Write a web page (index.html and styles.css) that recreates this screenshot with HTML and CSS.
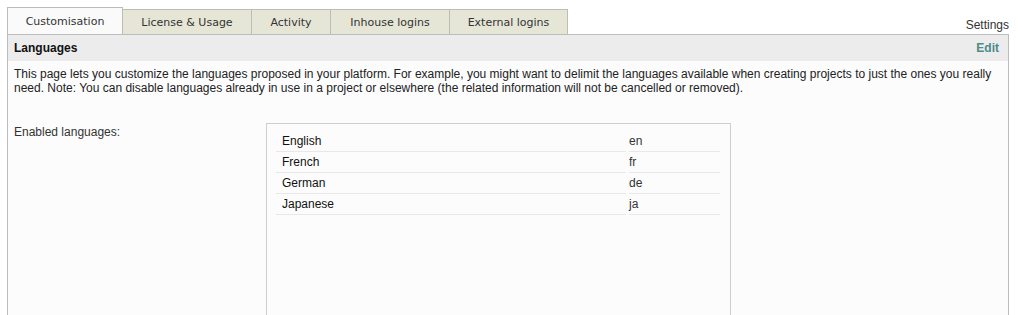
FILE: index.html
```html
<!DOCTYPE html>
<html>
<head>
<meta charset="utf-8">
<link rel="stylesheet" href="styles.css">
</head>
<body>
<div class="page">
  <div class="tabbar">
    <div class="tab active t-custom">Customisation</div>
    <div class="tab t-license">License &amp; Usage</div>
    <div class="tab t-activity">Activity</div>
    <div class="tab t-inhouse">Inhouse logins</div>
    <div class="tab t-external">External logins</div>
    <div class="settings">Settings</div>
  </div>
  <div class="panel">
    <div class="panel-head">
      <span class="title">Languages</span>
      <span class="edit">Edit</span>
    </div>
    <div class="panel-body">
      <p class="intro">This page lets you customize the languages proposed in your platform. For example, you might want to delimit the languages available when creating projects to just the ones you really need. Note: You can disable languages already in use in a project or elsewhere (the related information will not be cancelled or removed).</p>
      <div class="field">
        <div class="label">Enabled languages:</div>
        <div class="langbox">
          <table class="langs">
            <tr><td class="name">English</td><td class="code">en</td></tr>
            <tr><td class="name">French</td><td class="code">fr</td></tr>
            <tr><td class="name">German</td><td class="code">de</td></tr>
            <tr><td class="name">Japanese</td><td class="code">ja</td></tr>
          </table>
        </div>
      </div>
    </div>
  </div>
</div>
</body>
</html>
```

FILE: styles.css
```css
html, body {
  margin: 0;
  padding: 0;
  background: #ffffff;
}
body {
  font-family: "Liberation Sans", Arial, sans-serif;
  font-size: 12px;
  color: #222;
}
.page {
  padding: 7px 9px 0 7px;
}
.tabbar {
  display: flex;
  align-items: flex-end;
  height: 27px;
}
.tab {
  font-family: "DejaVu Sans", Verdana, sans-serif;
  font-size: 11px;
  color: #333;
  height: 25px;
  line-height: 25px;
  text-align: center;
  background: #e6e6d7;
  border: 1px solid #bdbdb5;
  border-bottom: none;
  margin-right: -1px;
  box-sizing: border-box;
  white-space: nowrap;
}
.tab.active {
  background: #fafafa;
  height: 27px;
  line-height: 28px;
}
.t-custom { width: 116px; }
.t-license { width: 130px; }
.t-activity { width: 80px; }
.t-inhouse { width: 120px; }
.t-external { width: 119px; }
.settings {
  margin-left: auto;
  color: #333;
  font-size: 12px;
  line-height: 14px;
  padding-bottom: 2px;
}
.panel {
  border: 1px solid #bdbdbd;
  border-bottom: none;
  background: #fcfcfc;
  height: 300px;
}
.panel-head {
  display: flex;
  justify-content: space-between;
  align-items: center;
  background: #ececec;
  height: 26px;
  padding: 0 9px 0 6px;
  font-weight: bold;
}
.title {
  color: #111;
}
.edit {
  color: #4d8a89;
}
.panel-body {
  padding: 0 6px;
}
.intro {
  margin: 6px 0 0 0;
  line-height: 14px;
  color: #222;
}
.field {
  display: flex;
  margin-top: 28px;
}
.label {
  width: 252px;
  padding-top: 2px;
  color: #333;
}
.langbox {
  width: 465px;
  border: 1px solid #cfcfcf;
  background: #fcfcfc;
  padding: 7px 0 0 9px;
  box-sizing: border-box;
  height: 200px;
}
.langs {
  border-collapse: separate;
  border-spacing: 3px 0;
  margin-left: -3px;
}
.langs td {
  height: 20px;
  padding: 0;
  border-bottom: 1px solid #e8e8e8;
  color: #111;
  vertical-align: middle;
}
.langs td.name {
  width: 344px;
  padding-left: 6px;
}
.langs td.code {
  width: 91px;
  color: #333;
}
```
